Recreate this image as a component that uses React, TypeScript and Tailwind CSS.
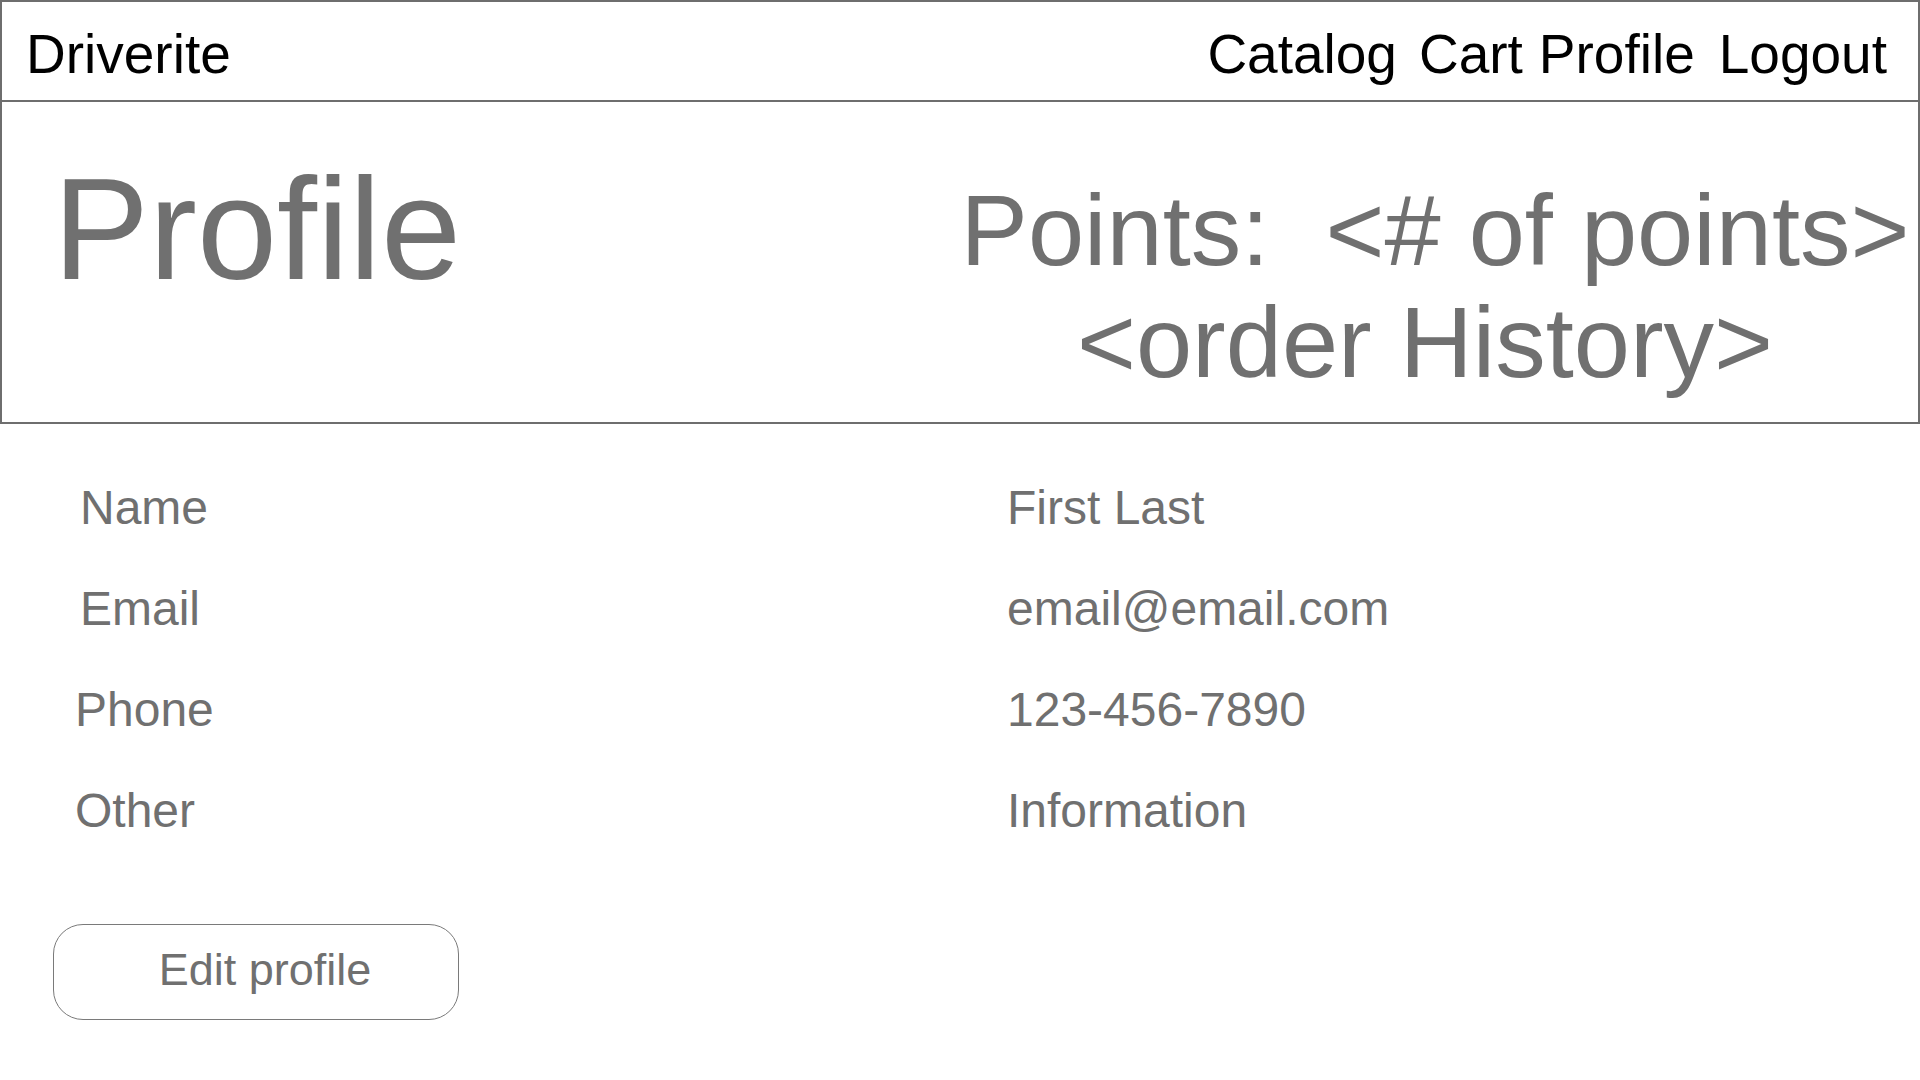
const font = { fontFamily: '"Liberation Sans", Arial, Helvetica, sans-serif' };

const rows = [
  { label: 'Name', value: 'First Last', inset: true },
  { label: 'Email', value: 'email@email.com', inset: true },
  { label: 'Phone', value: '123-456-7890', inset: false },
  { label: 'Other', value: 'Information', inset: false },
];

function Header() {
  return (
    <header className="h-[102px] border-2 border-[#6e6e6e] flex items-start justify-between pt-[25px] pl-6 pr-[31px] text-[55px] leading-[54px] text-black">
      <div>Driverite</div>
      <nav className="flex">
        <a>Catalog</a>
        <a className="ml-[22px]">Cart</a>
        <a className="ml-[16px]">Profile</a>
        <a className="ml-[24px]">Logout</a>
      </nav>
    </header>
  );
}

function Hero() {
  return (
    <section className="h-[322px] border-x-2 border-b-2 border-[#6e6e6e] flex text-[#707070]">
      <div className="w-[942px] pl-[51px] pt-[57px]">
        <h1 className="text-[144px] leading-[142px]">Profile</h1>
      </div>
      <div className="flex-1 pt-[72px] text-center text-[101px] leading-[112px] whitespace-nowrap">
        <div className="whitespace-pre pl-[8px]">Points:  &lt;# of points&gt;</div>
        <div className="pr-[12px]">&lt;order History&gt;</div>
      </div>
    </section>
  );
}

export default function App() {
  return (
    <div className="w-[1920px] h-[1080px] bg-white overflow-hidden" style={font}>
      <Header />
      <Hero />
      <div className="mt-[33px] pl-[75px] text-[48px] leading-[101px] text-[#707070]">
        {rows.map(r => (
          <div key={r.label} className="flex">
            <div className={r.inset ? 'w-[932px] pl-[5px]' : 'w-[932px]'}>{r.label}</div>
            <div>{r.value}</div>
          </div>
        ))}
      </div>
      <button className="mt-[63px] ml-[53px] w-[406px] h-[96px] rounded-[30px] border border-[#7a7a7a] pl-[18px] pb-[4px] text-[45px] text-[#707070]">
        Edit profile
      </button>
    </div>
  );
}
